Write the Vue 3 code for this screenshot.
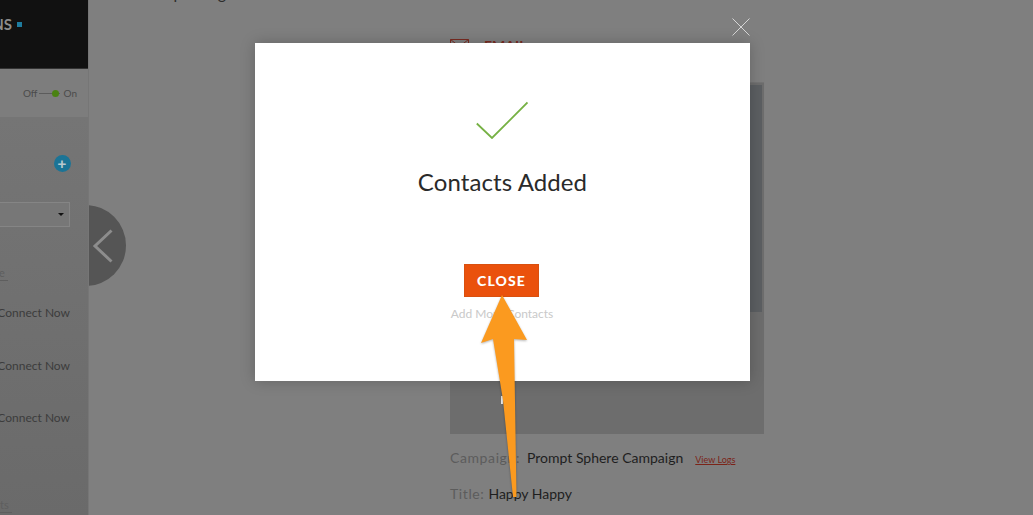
<template>
  <div class="page">
    <aside class="sidebar">
      <div class="brand"><span class="brand-text">NS</span><i class="brand-dot"></i></div>
      <div class="toggle-row">
        <span>Off</span><i class="toggle-line"><b></b></i><span>On</span>
      </div>
      <div class="side-body">
        <div class="add-btn">+</div>
        <div class="select"><i class="caret"></i></div>
        <div class="side-tab tab-top">e</div>
        <div v-for="n in 3" :key="n" class="connect">Connect Now</div>
        <div class="side-tab tab-bottom">ts</div>
      </div>
    </aside>

    <main class="content">
      <div class="page-title">Step Design</div>
      <div class="email-row">
        <svg class="mail" width="19" height="12" viewBox="0 0 19 12"><path d="M.5.5h18v11H.5zM.5.5l9 7 9-7" fill="none" stroke="#7a2c22" /></svg>
        <span>EMAIL</span>
      </div>
      <div class="preview"><i class="preview-mark"></i></div>
      <div class="meta meta-campaign">
        <span class="label">Campaign:</span><span>Prompt Sphere Campaign</span><a class="logs">View Logs</a>
      </div>
      <div class="meta meta-title"><span class="label">Title:</span><span>Happy Happy</span></div>
    </main>

    <div class="back"><svg width="24" height="34" viewBox="0 0 24 34"><path d="M20.500 1.500 4 17l16.500 15.500" fill="none" stroke="#8d8d8d" stroke-width="3" /></svg></div>

    <svg class="dismiss" width="18" height="18" viewBox="0 0 18 18"><path d="M.5.5l17 17M17.500.5l-17 17" stroke="#d6d6d6" stroke-width="1" /></svg>

    <section class="modal">
      <svg class="check" width="52" height="38" viewBox="0 0 52 38"><path d="M0.800 22.500 16 37 51.500 1.500" fill="none" stroke="#76b144" stroke-width="1.800" /></svg>
      <h1>Contacts Added</h1>
      <button class="close">CLOSE</button>
      <a class="more">Add More Contacts</a>
    </section>

    <svg class="arrow" width="50" height="206" viewBox="0 0 50 206">
      <path d="M22 1 47 46 34 45 36.500 203 33 203 23 106 13 45 1 49Z" fill="#fb9a1f" />
    </svg>
  </div>
</template>

<script setup>
</script>

<style scoped>
.page {
  position: relative;
  display: flex;
  width: 1033px;
  height: 515px;
  overflow: hidden;
  background: #7f7f7f;
  font-family: "Lato", "Open Sans", sans-serif;
  color: #1f1f1f;
}

.sidebar {
  display: flex;
  flex-direction: column;
  flex: none;
  width: 89px;
  border-right: 1px solid #767676;
  box-sizing: border-box;
}

.brand {
  display: flex;
  align-items: flex-start;
  justify-content: flex-end;
  gap: 5px;
  height: 69px;
  box-sizing: border-box;
  padding: 15px 66px 0 0;
  background: #111;
  border-bottom: 1px solid #333;
  color: #8d8d8d;
  font-size: 15px;
  font-weight: 700;
  line-height: 18px;
}

.brand-dot {
  flex: none;
  width: 5px;
  height: 5px;
  margin-top: 7px;
  background: #1f7c9e;
}

.toggle-row {
  display: flex;
  align-items: center;
  justify-content: flex-end;
  height: 48px;
  padding-right: 11px;
  font-size: 10px;
  color: #4b4b4b;
  background: #7d7d7d;
}

.toggle-line {
  position: relative;
  width: 21px;
  height: 1px;
  margin: 0 4px 0 1px;
  background: #5c5c5c;
}

.toggle-line b {
  position: absolute;
  top: -3px;
  left: 13px;
  width: 7px;
  height: 7px;
  border-radius: 50%;
  background: #4a8212;
}

.side-body {
  position: relative;
  flex: 1;
  background: linear-gradient(#757575, #6a6a6a);
}

.add-btn {
  position: absolute;
  top: 38px;
  left: 53.500px;
  width: 17px;
  height: 17px;
  border-radius: 50%;
  background: #1b7496;
  color: #b9c9cf;
  font: 700 15px/17px "Liberation Sans", sans-serif;
  text-align: center;
}

.select {
  position: absolute;
  top: 85px;
  left: 0;
  width: 70px;
  height: 25px;
  box-sizing: border-box;
  background: #777;
  border: 1px solid #858585;
  border-left: 0;
}

.caret {
  position: absolute;
  top: 10px;
  right: 5px;
  border: 3px solid transparent;
  border-top: 3px solid #111;
}

.side-tab {
  position: absolute;
  left: 0;
  color: #5e5e5e;
  font-size: 11px;
  line-height: 14px;
  border-bottom: 1px solid #5e5e5e;
}

.tab-top {
  top: 149px;
  width: 8px;
  text-indent: -1px;
}

.tab-bottom {
  top: 381px;
  width: 12px;
}

.connect {
  position: relative;
  top: 188px;
  margin: 0 0 37.500px -15px;
  width: 85px;
  text-align: right;
  color: #3c3c3c;
  font-size: 12px;
  line-height: 15px;
  white-space: nowrap;
}

.content {
  position: relative;
  flex: 1;
  padding-left: 361px;
  padding-top: 39px;
}

.page-title {
  position: absolute;
  top: -17px;
  left: 62px;
  font-size: 16px;
  line-height: 20px;
  color: #2c2c2c;
}

.email-row {
  display: flex;
  align-items: flex-start;
  gap: 15px;
  height: 14px;
  color: #7a2c22;
  font-weight: 700;
  font-size: 14px;
  line-height: 14px;
}

.preview {
  position: relative;
  width: 314px;
  height: 352px;
  margin-top: 29px;
  background: #6d6d6d;
  border-top: 1px solid #747474;
  box-sizing: border-box;
}

.preview::before {
  content: "";
  position: absolute;
  top: 2px;
  left: 300px;
  width: 12px;
  height: 227px;
  background: #5c5f62;
}

.preview-mark {
  position: absolute;
  top: 313px;
  left: 51px;
  width: 2px;
  height: 8px;
  background: #e8e8e8;
}

.meta {
  display: flex;
  align-items: baseline;
  font-size: 14px;
  line-height: 18px;
  color: #1e1e1e;
}

.meta-campaign {
  gap: 7px;
  margin-top: 15px;
}

.meta-title {
  gap: 4px;
  margin-top: 16px;
}

.label {
  color: #5c5c5c;
  letter-spacing: 0.6px;
}

.logs {
  margin-left: 5px;
  font-size: 9px;
  color: #7b2418;
  text-decoration: underline;
}

.back {
  position: absolute;
  top: 205px;
  left: 89px;
  display: flex;
  align-items: center;
  width: 37px;
  height: 81px;
  padding-left: 2px;
  box-sizing: border-box;
  overflow: hidden;
}

.back::before {
  content: "";
  position: absolute;
  top: 0;
  left: -44px;
  width: 81px;
  height: 81px;
  border-radius: 50%;
  background: #555;
}

.back svg {
  position: relative;
}

.dismiss {
  position: absolute;
  top: 18px;
  left: 732px;
}

.modal {
  position: absolute;
  top: 43px;
  left: 255px;
  display: flex;
  flex-direction: column;
  align-items: center;
  width: 495px;
  height: 338px;
  padding-top: 58px;
  box-sizing: border-box;
  background: #fff;
  box-shadow: 0 0 14px rgba(0, 0, 0, 0.22);
}

.check {
  margin-right: 2px;
}

.modal h1 {
  margin: 28px 0 0;
  color: #2a2a2a;
  font-size: 24px;
  font-weight: 400;
  letter-spacing: 0.1px;
  line-height: 30px;
}

.close {
  width: 75px;
  height: 33px;
  margin-top: 67px;
  margin-right: 2px;
  padding: 0;
  border: 1px solid #d9500f;
  background: #ea510c;
  color: #fff;
  font: 900 14px "Lato", sans-serif;
  letter-spacing: 1.1px;
}

.more {
  margin-top: 9px;
  margin-right: 1px;
  color: #c9c9c9;
  font-size: 12px;
  line-height: 15px;
}

.arrow {
  position: absolute;
  top: 294px;
  left: 480px;
  filter: drop-shadow(0 1px 1px rgba(0, 0, 0, 0.3));
}
</style>
